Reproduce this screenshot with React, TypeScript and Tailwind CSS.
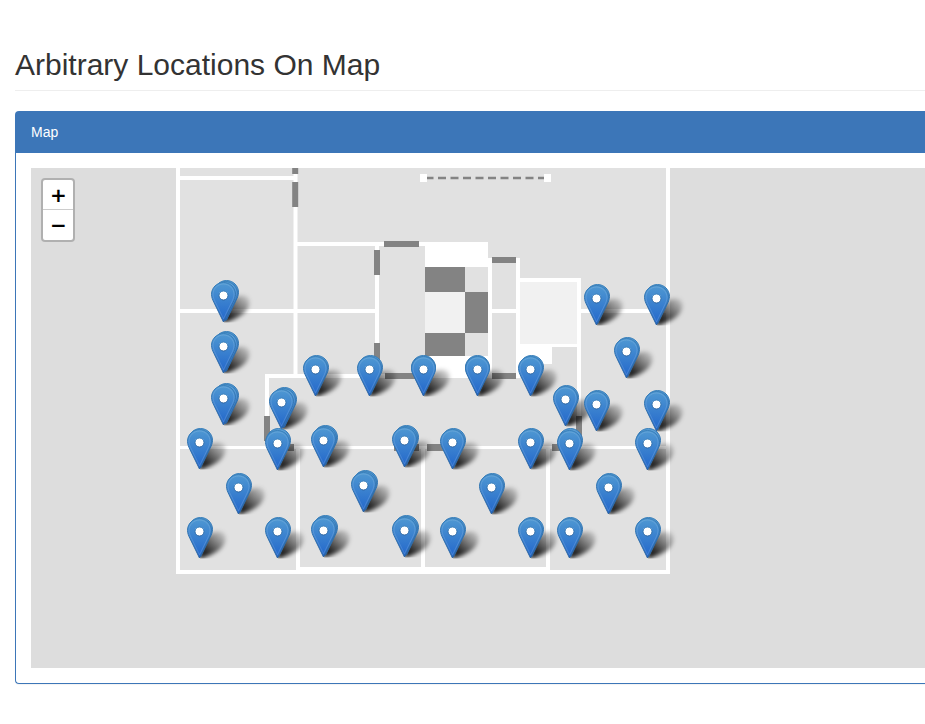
type Rect = [x: number, y: number, width: number, height: number];
type Point = [x: number, y: number];

const walls: Rect[] = [
  // outer shell
  [176, 168, 4, 406],
  [666, 168, 4, 406],
  [176, 570, 494, 4],
  [298, 567, 250, 7],
  // upper left rooms
  [180, 176, 114, 4],
  [293.5, 168, 4, 208],
  [297, 242, 128, 4],
  [375, 246, 4, 128],
  [180, 309, 195, 4],
  // core
  [425, 242, 63, 25],
  [425, 356, 65, 22],
  [488, 258, 4, 120],
  [516, 258, 4, 120],
  [492, 309, 24, 4],
  [520, 278, 61, 4],
  [577, 278, 4, 168],
  [516, 344, 65, 3],
  [516, 347, 36, 17],
  [581, 309, 85, 4],
  // corridor
  [265, 374, 225, 4],
  [265, 374, 4, 72],
  [176, 446, 494, 3],
  // lower rooms
  [296, 449, 4, 121],
  [421, 449, 4, 121],
  [546, 449, 4, 121],
  // ends of the dashed partition
  [420, 174, 7, 8],
  [544, 174, 7, 8],
];

const doors: Rect[] = [
  [292.200, 168, 6, 6],
  [292.200, 182, 6, 25],
  [384, 241, 35, 6],
  [374, 250, 6, 25],
  [374, 343, 6, 25],
  [492, 257, 24, 6],
  [492, 373, 24, 6],
  [385, 373, 35, 6],
  [264, 416, 6, 25],
  [576, 416, 6, 25],
  [270, 444, 24, 7],
  [394, 444, 25, 7],
  [427, 444, 25, 7],
  [552, 444, 25, 7],
  [425, 267, 40, 25],
  [465, 292, 23, 41],
  [425, 333, 40, 23],
];

const lightAreas: Rect[] = [
  [425, 292, 40, 41],
  [520, 282, 57, 62],
];

// Offsets of the pins that lie behind the front one of a group
const pair: Point[] = [[1, -1]];
const upright: Point[] = [[0, -1]];
const tall: Point[] = [[1, -2]];
const close: Point[] = [[2, -2], [1, -1]];
const wide: Point[] = [[3, -2], [2, -1]];

// Top left corner of the front pin of every group, back to front
const groups: { at: Point; behind: Point[] }[] = [
  { at: [211, 282], behind: wide },
  { at: [584, 285], behind: pair },
  { at: [644, 285], behind: pair },
  { at: [211, 333], behind: wide },
  { at: [614, 338], behind: pair },
  { at: [303, 356], behind: pair },
  { at: [357, 356], behind: pair },
  { at: [411, 356], behind: upright },
  { at: [465, 356], behind: upright },
  { at: [518, 356], behind: pair },
  { at: [211, 385], behind: wide },
  { at: [553, 386], behind: pair },
  { at: [269, 389], behind: wide },
  { at: [584, 391], behind: pair },
  { at: [644, 391], behind: pair },
  { at: [311, 427], behind: close },
  { at: [392, 427], behind: close },
  { at: [187, 429], behind: pair },
  { at: [440, 429], behind: pair },
  { at: [518, 429], behind: pair },
  { at: [265, 430], behind: tall },
  { at: [557, 430], behind: tall },
  { at: [635, 430], behind: tall },
  { at: [351, 472], behind: close },
  { at: [226, 474], behind: pair },
  { at: [479, 474], behind: pair },
  { at: [596, 474], behind: pair },
  { at: [311, 517], behind: close },
  { at: [392, 517], behind: close },
  { at: [187, 518], behind: pair },
  { at: [265, 518], behind: pair },
  { at: [440, 518], behind: pair },
  { at: [518, 518], behind: pair },
  { at: [557, 518], behind: pair },
  { at: [635, 518], behind: pair },
];

const pins: Point[] = groups.flatMap(({ at, behind }) => [
  ...behind.map(([dx, dy]): Point => [at[0] + dx, at[1] + dy]),
  at,
]);

const origin: Point = [31, 168];

function Rects({ items, fill }: { items: Rect[]; fill: string }) {
  return (
    <g fill={fill}>
      {items.map(([x, y, width, height], i) => (
        <rect key={i} x={x} y={y} width={width} height={height} />
      ))}
    </g>
  );
}

function FloorPlan() {
  return (
    <svg className="block" width="900" height="500" viewBox="31 168 900 500" aria-hidden="true">
      <defs>
        <linearGradient id="shade" x1="13" y1="41" x2="36" y2="16" gradientUnits="userSpaceOnUse">
          <stop offset="0" stopColor="#000" stopOpacity="1" />
          <stop offset="0.3" stopColor="#000" stopOpacity="0.8" />
          <stop offset="0.65" stopColor="#000" stopOpacity="0.46" />
          <stop offset="1" stopColor="#000" stopOpacity="0.14" />
        </linearGradient>
        <filter id="soft" x="-40%" y="-40%" width="180%" height="180%">
          <feGaussianBlur stdDeviation="2.3" />
        </filter>
        <clipPath id="ground">
          <rect x="13" y="4" width="36" height="36.500" />
        </clipPath>
        <g id="pin-shadow" clipPath="url(#ground)">
          <path
            d="M12 41L15 24C20 16 28 12 35 14C41 17 39 27 32 32C27 36 19 39 12 41Z"
            fill="url(#shade)"
            filter="url(#soft)"
          />
        </g>
      </defs>
      <rect x="176" y="168" width="494" height="406" fill="#e1e1e1" />
      <Rects items={walls} fill="#ffffff" />
      <Rects items={lightAreas} fill="#f1f1f1" />
      <Rects items={doors} fill="#838383" />
      <path d="M427 178H544" stroke="#838383" strokeWidth="2.5" strokeDasharray="8 4.5" strokeDashoffset="1.5" />
      {groups.map(({ at: [x, y] }, i) => (
        <use key={i} href="#pin-shadow" x={x} y={y} />
      ))}
    </svg>
  );
}

function Pin({ at: [x, y], label }: { at: Point; label: string }) {
  return (
    <button
      type="button"
      aria-label={label}
      className="absolute block h-[41px] w-[25px] cursor-pointer"
      style={{ left: x - origin[0], top: y - origin[1] }}
    >
      <svg className="block" width="25" height="41" viewBox="0 0 25 41" aria-hidden="true">
        <defs>
          <linearGradient id="pin-fill" x1="0" y1="0" x2="0" y2="1">
            <stop offset="0" stopColor="#4f98d2" />
            <stop offset="1" stopColor="#2266cb" />
          </linearGradient>
          <linearGradient id="pin-edge" x1="0" y1="0" x2="0" y2="1">
            <stop offset="0" stopColor="#3a80ba" />
            <stop offset="1" stopColor="#2a629f" />
          </linearGradient>
        </defs>
        <path
          d="M12.500.5C5.700.5.5 5.900.5 12.300C.5 15.300 1.700 18 3 20.600L12.500 40L22 20.600C23.300 18 24.500 15.300 24.500 12.300C24.500 5.900 19.300.5 12.500.5Z"
          fill="url(#pin-fill)"
          stroke="url(#pin-edge)"
        />
        <path
          d="M12.500 2C6.600 2 2 6.700 2 12.300C2 15 3.100 17.500 4.300 20L12.500 36.800L20.700 20C21.900 17.500 23 15 23 12.300C23 6.700 18.400 2 12.500 2Z"
          fill="none"
          stroke="#fff"
          strokeOpacity="0.13"
        />
        <circle cx="12.500" cy="13.500" r="4.500" fill="#fff" stroke="url(#pin-edge)" />
      </svg>
    </button>
  );
}

export default function App() {
  return (
    <main className="overflow-hidden bg-white pt-12 pb-10 pl-[15px] font-['Liberation_Sans',Arial,sans-serif] text-sm leading-5 text-[#333]">
      <h1 className="mb-5 border-b border-[#eee] pb-[9px] text-[30px] leading-[33px] font-medium">
        Arbitrary Locations On Map
      </h1>
      <section className="rounded-l border border-r-0 border-[#3c76b8] shadow-[0_1px_1px_rgba(0,0,0,0.05)]">
        <h2 className="bg-[#3c76b8] px-[15px] pt-[10px] pb-[11px] text-white">Map</h2>
        <div className="py-[15px] pl-[15px]">
          <div className="relative h-[500px] overflow-hidden bg-[#ddd]">
            <FloorPlan />
            {pins.map((at, i) => (
              <Pin key={i} at={at} label={`Location ${i + 1}`} />
            ))}
            <div className="absolute top-[10px] left-[10px] flex w-[34px] flex-col rounded border-2 border-black/20 bg-white bg-clip-padding font-['DejaVu_Sans',sans-serif] text-xl leading-[30px] font-bold text-black">
              <button type="button" aria-label="Zoom in" className="h-[30px] cursor-pointer border-b border-[#ccc] indent-px">
                +
              </button>
              <button type="button" aria-label="Zoom out" className="h-[30px] cursor-pointer indent-px">
                −
              </button>
            </div>
          </div>
        </div>
      </section>
    </main>
  );
}
